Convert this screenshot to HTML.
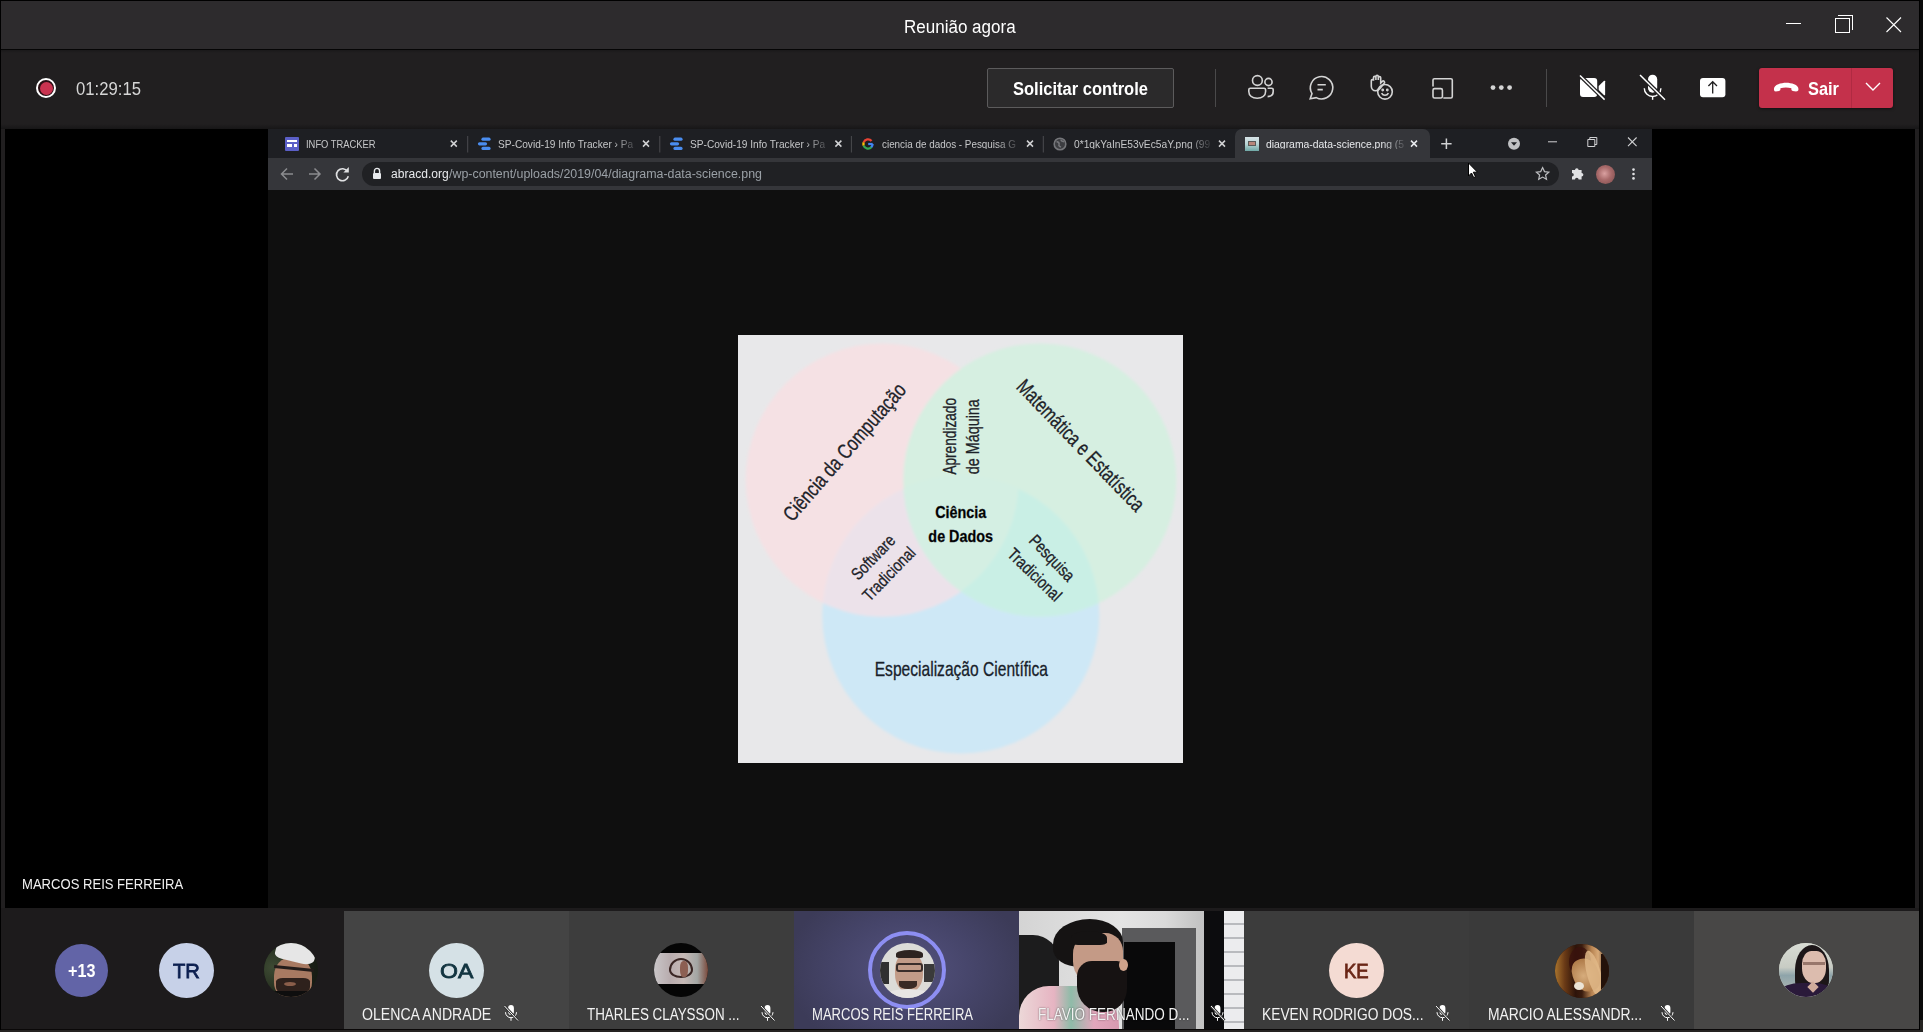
<!DOCTYPE html>
<html><head><meta charset="utf-8">
<style>
*{margin:0;padding:0;box-sizing:border-box;}
html,body{width:1923px;height:1032px;overflow:hidden;background:#0b0b0b;font-family:"Liberation Sans",sans-serif;position:relative;}
.a{position:absolute;}
.t{position:absolute;white-space:nowrap;line-height:1;}
.sx{display:inline-block;transform-origin:0 50%;}
</style></head>
<body>
<!-- window frame -->
<div class="a" style="left:0;top:0;width:1920px;height:1032px;background:#000;"></div>
<div class="a" style="left:1px;top:1px;width:1918px;height:48px;background:#2d2b2d;"></div>
<div class="a" style="left:1px;top:49px;width:1918px;height:1px;background:#050505;"></div>
<div class="a" style="left:1px;top:50px;width:1918px;height:858px;background:#211f20;"></div>
<div class="a" style="left:1px;top:50px;width:1918px;height:3px;background:linear-gradient(#1a191a,#211f20);"></div>
<div class="a" style="left:1px;top:124px;width:1918px;height:5px;background:linear-gradient(#211f20,#171617);"></div>
<div class="a" style="left:5px;top:129px;width:1910px;height:779px;background:#000;"></div>
<div class="a" style="left:1px;top:908px;width:1918px;height:122px;background:#1d1b1c;"></div>
<div class="a" style="left:1px;top:1029px;width:1918px;height:1px;background:#0a0808;"></div>
<div class="a" style="left:0;top:1030px;width:1923px;height:2px;background:#252321;"></div>
<div class="a" style="left:1920px;top:1020px;width:3px;height:10px;background:#252321;"></div>

<!-- TITLE -->
<div class="t" style="left:904px;top:18px;font-size:18px;color:#fff;"><span class="sx" style="transform:scaleX(.945)">Reunião agora</span></div>
<div class="a" style="left:1786px;top:23px;width:15px;height:1px;background:#fff;"></div>
<div class="a" style="left:1835px;top:18px;width:15px;height:15px;border:1px solid #fff;"></div>
<div class="a" style="left:1838px;top:15px;width:15px;height:3px;border-top:1px solid #fff;border-right:1px solid #fff;"></div>
<div class="a" style="left:1849px;top:15px;width:4px;height:15px;border-right:1px solid #fff;"></div>
<svg class="a" style="left:1885px;top:16px;" width="18" height="18" viewBox="0 0 18 18"><path d="M1.5 1.5 L16 16 M16 1.5 L1.5 16" stroke="#fff" stroke-width="1.1"/></svg>

<!-- TOOLBAR -->
<div class="a" style="left:36px;top:78px;width:20px;height:20px;border-radius:50%;border:2px solid #fff;background:#2a0e14;"></div>
<div class="a" style="left:39.5px;top:81.5px;width:13px;height:13px;border-radius:50%;background:#c93350;"></div>
<div class="t" style="left:76px;top:80px;font-size:18px;color:#d6d6d6;"><span class="sx" style="transform:scaleX(.927)">01:29:15</span></div>
<div class="a" style="left:987px;top:68px;width:187px;height:40px;border:1px solid #5c5b5c;border-radius:2px;background:#2b2a2b;"></div>
<div class="t" style="left:1013px;top:80px;font-size:18px;font-weight:bold;color:#fff;"><span class="sx" style="transform:scaleX(.918)">Solicitar controle</span></div>
<div class="a" style="left:1215px;top:69px;width:1px;height:38px;background:#4a494a;"></div>
<svg class="a" style="left:1237px;top:68px;" width="290" height="40" viewBox="1237 68 290 40" fill="none" stroke="#d4d4d4" stroke-width="1.6">
  <circle cx="1257.4" cy="80.5" r="4.9"/>
  <circle cx="1268.5" cy="82" r="3.6"/>
  <path d="M1250.5 88.2 h13.5 a1.6 1.6 0 0 1 1.6 1.6 v1.8 c0 4 -3.4 6.6 -8.4 6.6 s-8.4 -2.6 -8.4 -6.6 v-1.8 a1.6 1.6 0 0 1 1.6 -1.6z"/>
  <path d="M1267.6 88.2 h4 a1.6 1.6 0 0 1 1.6 1.6 v1.6 c0 3 -2.2 5 -5.6 5.2"/>
  <path d="M1310.2 98.8 l1.8 -5.2 a11.2 11.2 0 1 1 4.2 4.0 z"/>
  <path d="M1317.5 84.8 h8.3 M1317.5 89.6 h5.3"/>
  <path d="M1373.5 80.8 v-3.2 a1.2 1.2 0 0 1 2.4 0 v2.4 v-3.4 a1.2 1.2 0 0 1 2.4 0 v3.4 v-2.2 a1.2 1.2 0 0 1 2.4 0 v5.2 l1.6 -1.6 a1.3 1.3 0 0 1 1.9 1.8 l-4 5 a6 6 0 0 1 -4.6 2.6 a4.5 4.5 0 0 1 -4.3 -4.5 v-5.6 a1.1 1.1 0 0 1 2.2 0 z"/>
  <circle cx="1385" cy="91.8" r="7.3"/>
  <path d="M1381.6 93.2 a3.8 3.8 0 0 0 6.8 0"/>
  <circle cx="1382.7" cy="90" r="0.6" fill="#d4d4d4"/><circle cx="1387.3" cy="90" r="0.6" fill="#d4d4d4"/>
  <path d="M1433 86.5 v-6.4 a1.4 1.4 0 0 1 1.4 -1.4 h16.5 a1.4 1.4 0 0 1 1.4 1.4 v16.5 a1.4 1.4 0 0 1 -1.4 1.4 h-7.6"/>
  <rect x="1433" y="88.6" width="9.4" height="9.4" rx="1.6"/>
  <circle cx="1493" cy="87.6" r="2.4" fill="#d4d4d4" stroke="none"/>
  <circle cx="1501.3" cy="87.6" r="2.4" fill="#d4d4d4" stroke="none"/>
  <circle cx="1509.6" cy="87.6" r="2.4" fill="#d4d4d4" stroke="none"/>
</svg>
<div class="a" style="left:1546px;top:69px;width:1px;height:38px;background:#4a494a;"></div>
<svg class="a" style="left:1571px;top:68px;" width="170" height="40" viewBox="1571 68 170 40">
  <rect x="1580" y="78" width="17.2" height="19" rx="3" fill="#fff"/>
  <path d="M1598.7 86 l5.4 -5.2 a0.7 0.7 0 0 1 1 0.5 v13.4 a0.7 0.7 0 0 1 -1 0.5 l-5.4 -5.2z" fill="#fff"/>
  <path d="M1580 75.5 L1604.6 99.6" stroke="#201f20" stroke-width="4"/>
  <path d="M1580 75.5 L1604.6 99.6" stroke="#fff" stroke-width="1.5"/>
  <rect x="1648" y="74.7" width="9.2" height="18" rx="4.6" fill="#fff"/>
  <path d="M1644.3 88.2 a8.3 8.3 0 0 0 16.6 0" fill="none" stroke="#fff" stroke-width="1.4"/>
  <path d="M1652.6 96.4 v3.4" stroke="#fff" stroke-width="1.4"/>
  <path d="M1640 75 L1665 99.7" stroke="#201f20" stroke-width="4"/>
  <path d="M1640 75 L1665 99.7" stroke="#fff" stroke-width="1.5"/>
  <rect x="1700" y="78" width="25.4" height="19.2" rx="3" fill="#fff"/>
  <path d="M1712.7 93.4 V81.8 M1708.4 86 l4.3 -4.3 4.3 4.3" fill="none" stroke="#201f20" stroke-width="1.3"/>
</svg>
<div class="a" style="left:1759px;top:68px;width:134px;height:40px;border-radius:3px;background:#c4314b;box-shadow:0 1px 3px rgba(0,0,0,.5);"></div>
<div class="a" style="left:1851px;top:68px;width:1px;height:40px;background:#b02a42;"></div>
<svg class="a" style="left:1771px;top:77px;" width="32" height="20" viewBox="0 0 32 20">
  <path d="M3.2 13.5 c-1 -3 1 -5 4 -6.2 c5 -2 11 -2 16 0 c3 1.2 5 3.2 4 6.2 l-1 0.8 c-1 0.3 -3 0 -4.5 -0.4 c-1.3 -0.4 -1.4 -1.2 -1.3 -2.6 c-3.5 -1.2 -7.5 -1.2 -11 0 c0.1 1.4 0 2.2 -1.3 2.6 c-1.5 0.4 -3.5 0.7 -4.5 0.4z" fill="#fff"/>
</svg>
<div class="t" style="left:1808px;top:80px;font-size:18px;font-weight:bold;color:#fff;"><span class="sx" style="transform:scaleX(.91)">Sair</span></div>
<svg class="a" style="left:1864px;top:81px;" width="18" height="12" viewBox="0 0 18 12"><path d="M2 2 l7 7 7 -7" fill="none" stroke="#fff" stroke-width="1.4"/></svg>

<!-- BROWSER -->
<div class="a" style="left:268px;top:129px;width:1384px;height:29px;background:#1e1f23;"></div>
<div class="a" style="left:268px;top:158px;width:1384px;height:32px;background:#35363a;"></div>
<div class="a" style="left:268px;top:190px;width:1384px;height:718px;background:#0f0f0f;"></div>
<!-- active tab -->
<div class="a" style="left:1235px;top:129px;width:195px;height:29px;background:#35363a;border-radius:7px 7px 0 0;"></div>
<!-- tab 1 -->
<div class="a" style="left:285px;top:137px;width:14px;height:14px;background:#5b5fc7;border-radius:1px;"></div>
<div class="a" style="left:287px;top:140px;width:10px;height:2px;background:#fff;"></div>
<div class="a" style="left:287px;top:144px;width:5px;height:3px;background:#fff;"></div>
<div class="a" style="left:294px;top:144px;width:3px;height:3px;background:#fff;"></div>
<div class="t" style="left:306px;top:139px;font-size:10.5px;color:#c6c7c9;"><span class="sx" style="transform:scaleX(.893)">INFO TRACKER</span></div>
<!-- tab 2 -->
<svg class="a" style="left:477px;top:137px;" width="15" height="14" viewBox="0 0 15 14"><g stroke="#4a8df0" stroke-width="3.2" stroke-linecap="round"><path d="M6 2.2 h6"/><path d="M2.5 6.8 h6"/><path d="M6 11.4 h6"/></g></svg>
<div class="t" style="left:498px;top:138.5px;width:138px;-webkit-mask-image:linear-gradient(90deg,#000 84%,rgba(0,0,0,.15) 100%);font-size:10.5px;color:#c6c7c9;"><span class="sx" style="transform:scaleX(.965)">SP-Covid-19 Info Tracker › Pa</span></div>
<!-- tab 3 -->
<svg class="a" style="left:669px;top:137px;" width="15" height="14" viewBox="0 0 15 14"><g stroke="#4a8df0" stroke-width="3.2" stroke-linecap="round"><path d="M6 2.2 h6"/><path d="M2.5 6.8 h6"/><path d="M6 11.4 h6"/></g></svg>
<div class="t" style="left:690px;top:138.5px;width:138px;-webkit-mask-image:linear-gradient(90deg,#000 84%,rgba(0,0,0,.15) 100%);font-size:10.5px;color:#c6c7c9;"><span class="sx" style="transform:scaleX(.965)">SP-Covid-19 Info Tracker › Pa</span></div>
<!-- tab 4 google -->
<svg class="a" style="left:861px;top:137px;" width="14" height="14" viewBox="0 0 14 14">
  <path d="M10.52 4.04 A4.6 4.6 0 0 0 2.68 5.43" fill="none" stroke="#ea4335" stroke-width="2.3"/>
  <path d="M2.68 5.43 A4.6 4.6 0 0 0 2.68 8.57" fill="none" stroke="#fbbc05" stroke-width="2.3"/>
  <path d="M2.68 8.57 A4.6 4.6 0 0 0 10.52 9.96" fill="none" stroke="#34a853" stroke-width="2.3"/>
  <path d="M10.25 10.25 A4.6 4.6 0 0 0 11.60 7.00" fill="none" stroke="#4285f4" stroke-width="2.3"/>
  <path d="M7.2 7 H11.7" stroke="#4285f4" stroke-width="2.2"/>
</svg>
<div class="t" style="left:882px;top:138.5px;width:136px;-webkit-mask-image:linear-gradient(90deg,#000 84%,rgba(0,0,0,.15) 100%);font-size:10.5px;color:#c6c7c9;"><span class="sx" style="transform:scaleX(.94)">ciencia de dados - Pesquisa G</span></div>
<!-- tab 5 globe -->
<svg class="a" style="left:1053px;top:137px;" width="14" height="14" viewBox="0 0 14 14">
  <circle cx="7" cy="7" r="5.8" fill="#3c3d41" stroke="#75767a" stroke-width="1.6"/>
  <path d="M3.5 4.5 c2 0.5 3 1.5 2.5 3 c-0.5 1 0.5 2 2 2.5 M8 2.5 c0 1.5 1.5 2 3 2.2" fill="none" stroke="#75767a" stroke-width="1.6"/>
</svg>
<div class="t" style="left:1074px;top:138.5px;width:136px;-webkit-mask-image:linear-gradient(90deg,#000 84%,rgba(0,0,0,.15) 100%);font-size:10.5px;color:#c6c7c9;"><span class="sx" style="transform:scaleX(.975)">0*1qkYaInE53vEc5aY.png (99</span></div>
<!-- tab 6 active -->
<div class="a" style="left:1245px;top:137px;width:14px;height:14px;background:linear-gradient(#d8e4e8,#b8d4d4 50%,#6fa8a6);"></div>
<div class="a" style="left:1248px;top:141px;width:8px;height:5px;background:#b8867a;border:1px solid #5a5a58;"></div>
<div class="t" style="left:1266px;top:138.5px;width:138px;-webkit-mask-image:linear-gradient(90deg,#000 84%,rgba(0,0,0,.15) 100%);font-size:10.5px;color:#e8eaed;"><span class="sx" style="transform:scaleX(.99)">diagrama-data-science.png (5</span></div>
<!-- omnibox -->
<div class="a" style="left:362px;top:162px;width:1197px;height:24px;border-radius:12px;background:#202124;"></div>
<!-- close buttons -->
<svg class="a" style="left:268px;top:129px;" width="1384" height="61" viewBox="268 129 1384 61" fill="none" stroke="#d0d1d3" stroke-width="1.5">
  <path d="M450.8 140.6 l6 6 M456.8 140.6 l-6 6"/>
  <path d="M643 140.6 l6 6 M649 140.6 l-6 6"/>
  <path d="M835.4 140.6 l6 6 M841.4 140.6 l-6 6"/>
  <path d="M1027 140.6 l6 6 M1033 140.6 l-6 6"/>
  <path d="M1219 140.6 l6 6 M1225 140.6 l-6 6"/>
  <path d="M1411 140.6 l6 6 M1417 140.6 l-6 6" stroke="#e8eaed"/>
  <path d="M467.7 136 v16.5 M659.8 136 v16.5 M851.4 136 v16.5 M1043.3 136 v16.5" stroke="#4a4b4f" stroke-width="1"/>
  <path d="M1446.4 138.5 v10.4 M1441.2 143.7 h10.4" stroke="#d0d1d3" stroke-width="1.5"/>
  <circle cx="1514" cy="143.7" r="6" fill="#c0c1c3" stroke="none"/>
  <path d="M1511 142.3 h6 l-3 3.4z" fill="#1e1f23" stroke="none"/>
  <path d="M1548 141.8 h9" stroke-width="1"/>
  <path d="M1587.8 139.5 h7 v7 h-7z M1589.8 139.5 v-2 h7 v7 h-2" stroke-width="1"/>
  <path d="M1628 137.5 l8.6 8.6 M1636.6 137.5 l-8.6 8.6" stroke-width="1.1"/>
  <!-- nav -->
  <path d="M293 174 h-11 M287 168.5 l-5.5 5.5 5.5 5.5" stroke="#8b8c8f" stroke-width="1.5"/>
  <path d="M309 174 h11 M314.5 168.5 l5.5 5.5 -5.5 5.5" stroke="#8b8c8f" stroke-width="1.5"/>
  <path d="M347.5 171.4 a6 6 0 1 0 0.8 4.8" stroke="#e0e1e3" stroke-width="1.6"/>
  <path d="M348.8 167 v5.4 h-5.4z" fill="#e0e1e3" stroke="none"/>
  <!-- star -->
  <path d="M1542.6 167.6 l1.9 4 4.3 .5 -3.2 2.9 .9 4.3 -3.9 -2.2 -3.9 2.2 .9 -4.3 -3.2 -2.9 4.3 -.5z" stroke="#bdbec1" stroke-width="1.2"/>
  <circle cx="1633.5" cy="169.6" r="1.3" fill="#e0e1e3" stroke="none"/>
  <circle cx="1633.5" cy="174" r="1.3" fill="#e0e1e3" stroke="none"/>
  <circle cx="1633.5" cy="178.4" r="1.3" fill="#e0e1e3" stroke="none"/>
</svg>
<svg class="a" style="left:371px;top:167px;" width="12" height="13" viewBox="0 0 12 13"><path d="M3.4 6 v-2 a2.6 2.6 0 0 1 5.2 0 v2" fill="none" stroke="#e8eaed" stroke-width="1.4"/><rect x="2" y="6" width="8" height="6" rx="1" fill="#e8eaed"/></svg>
<div class="t" style="left:391px;top:168px;font-size:12.5px;color:#e8eaed;"><span class="sx" style="transform:scaleX(.966)">abracd.org</span></div>
<div class="t" style="left:448.5px;top:168px;font-size:12.5px;color:#9aa0a6;"><span class="sx" style="transform:scaleX(.992)">/wp-content/uploads/2019/04/diagrama-data-science.png</span></div>
<!-- cursor -->
<svg class="a" style="left:1467px;top:162px;" width="12" height="17" viewBox="0 0 12 17"><path d="M1.5 1 v13 l3 -3 2.2 4.6 1.8 -0.9 -2.2 -4.5 h4.2z" fill="#fff" stroke="#000" stroke-width="1"/></svg>
<!-- puzzle -->
<svg class="a" style="left:1570px;top:166px;" width="15" height="15" viewBox="0 0 15 15"><path d="M2 4 h3 a1.8 1.8 0 0 1 3.6 0 h3 v3 a1.8 1.8 0 0 1 0 3.6 v3 h-3 a1.8 1.8 0 0 0 -3.6 0 h-3 v-3 a1.8 1.8 0 0 0 0 -3.6z" fill="#e0e1e3"/></svg>
<!-- avatar -->
<div class="a" style="left:1596px;top:164.5px;width:19px;height:19px;border-radius:50%;background:radial-gradient(circle at 45% 45%,#d9a0a0 0,#a86a6a 45%,#7a4a4a 100%);"></div>

<!-- DIAGRAM -->
<div class="a" style="left:737.5px;top:335px;width:445.5px;height:428px;background:#e8e8ea;overflow:hidden;">
<svg class="a" style="left:0;top:0;" width="446" height="428" viewBox="737.5 335 445.5 428">
  <defs>
    <filter id="bl" x="-10%" y="-10%" width="120%" height="120%"><feGaussianBlur stdDeviation="1.8"/></filter>
    <clipPath id="cb"><circle cx="960" cy="615" r="138.5"/></clipPath>
    <clipPath id="cp"><circle cx="881.5" cy="480" r="136.5"/></clipPath>
  </defs>
  <g filter="url(#bl)">
    <circle cx="960" cy="615" r="138.5" fill="#cee8f6"/>
    <circle cx="881.5" cy="480" r="136.5" fill="#f5e1e4"/>
    <circle cx="881.5" cy="480" r="136.5" fill="#ece2ea" clip-path="url(#cb)"/>
    <circle cx="1039" cy="480" r="136.5" fill="#d6efe1"/>
    <circle cx="1039" cy="480" r="136.5" fill="#c9efe5" clip-path="url(#cb)"/>
    <g clip-path="url(#cb)"><circle cx="1039" cy="480" r="136.5" fill="#d4efe3" clip-path="url(#cp)"/></g>
  </g>
  <g font-family="Liberation Sans, sans-serif" fill="#1d2228" text-anchor="middle" stroke="#1d2228" stroke-width="0.3">
    <text id="d1" transform="translate(849.1 456.7) rotate(-49) scale(0.78 1)" font-size="21">Ciência da Computação</text>
    <text id="d2" transform="translate(1074.8 450.3) rotate(46) scale(0.76 1)" font-size="21">Matemática e Estatística</text>
    <text id="d3" transform="translate(954.8 436.3) rotate(-90) scale(0.78 1)" font-size="17.5">Aprendizado</text>
    <text id="d4" transform="translate(977.9 436.7) rotate(-90) scale(0.82 1)" font-size="17.5">de Máquina</text>
    <text id="d5" transform="translate(959.9 518.3) scale(0.87 1)" font-size="16.5" font-weight="bold" fill="#000">Ciência</text>
    <text id="d6" transform="translate(959.9 541.5) scale(0.87 1)" font-size="16.5" font-weight="bold" fill="#000">de Dados</text>
    <text id="d7" transform="translate(876.6 561.3) rotate(-46) scale(0.82 1)" font-size="17">Software</text>
    <text id="d8" transform="translate(892.3 578) rotate(-46) scale(0.82 1)" font-size="17">Tradicional</text>
    <text id="d9" transform="translate(1047.1 562) rotate(46) scale(0.82 1)" font-size="17">Pesquisa</text>
    <text id="d10" transform="translate(1029.8 578.8) rotate(44) scale(0.82 1)" font-size="17">Tradicional</text>
    <text id="d11" transform="translate(960.6 676.2) scale(0.78 1)" font-size="20" fill="#16212c">Especialização Científica</text>
  </g>
</svg>
</div>
<!-- stage name -->
<div class="t" style="left:22px;top:875.5px;font-size:15.5px;color:#f0f0f0;"><span class="sx" style="transform:scaleX(.843)">MARCOS REIS FERREIRA</span></div>
<!--STAGE-->
<!-- STRIP tiles -->
<div class="a" style="left:344px;top:911px;width:225px;height:118px;background:#444444;"></div>
<div class="a" style="left:569px;top:911px;width:225px;height:118px;background:#3d3d3d;"></div>
<div class="a" style="left:794px;top:911px;width:225px;height:118px;background:radial-gradient(ellipse 120px 90px at 113px 58px,#54527e 0%,#46456a 55%,#3c3b58 100%);"></div>
<div class="a" style="left:1019px;top:911px;width:225px;height:118px;background:#d8d8d8;overflow:hidden;">
  <div class="a" style="left:0;top:0;width:225px;height:118px;background:linear-gradient(90deg,#d4d4d4 0%,#e4e4e4 45%,#dadada 65%,#c4c4c4 80%,#bdbdbd 100%);"></div>
  <div class="a" style="left:185px;top:0;width:20px;height:118px;background:#0c0c0e;"></div>
  <div class="a" style="left:205px;top:0;width:20px;height:118px;background:repeating-linear-gradient(180deg,#ececee 0 12px,#b9babe 12px 14px);"></div>
  <div class="a" style="left:103px;top:17px;width:74px;height:101px;background:#5a5a5c;"></div>
  <div class="a" style="left:105px;top:31px;width:51px;height:87px;background:#09090a;"></div>
  <div class="a" style="left:0;top:24px;width:40px;height:94px;border-radius:0 26px 0 0;background:#1c1c1d;"></div>
  <div class="a" style="left:0;top:75px;width:100px;height:43px;border-radius:30px 40px 0 0;background:linear-gradient(90deg,#ecd8d8 0%,#e6b4c2 35%,#8fbba8 52%,#e2a6bc 75%,#d89ab0 100%);"></div>
  <div class="a" style="left:34px;top:8px;width:70px;height:48px;border-radius:55% 50% 30% 40%;background:#151313;"></div>
  <div class="a" style="left:54px;top:22px;width:50px;height:52px;border-radius:40% 35% 30% 45%;background:#c49a86;"></div>
  <div class="a" style="left:52px;top:20px;width:36px;height:14px;border-radius:50% 50% 20% 20%;background:#151313;"></div>
  <div class="a" style="left:58px;top:50px;width:50px;height:51px;border-radius:30% 20% 45% 50%;background:#161212;"></div>
  <div class="a" style="left:100px;top:48px;width:9px;height:12px;border-radius:50%;background:#cfa38c;"></div>
</div>
<div class="a" style="left:1244px;top:911px;width:225px;height:118px;background:#3c3c3c;"></div>
<div class="a" style="left:1469px;top:911px;width:225px;height:118px;background:#3a3a3a;"></div>
<div class="a" style="left:1694px;top:911px;width:225px;height:118px;background:#484746;"></div>

<!-- left avatars -->
<div class="a" style="left:55px;top:943.5px;width:53px;height:53px;border-radius:50%;background:#6264a7;"></div>
<div class="t" style="left:68px;top:961px;font-size:19px;font-weight:bold;color:#fff;"><span class="sx" style="transform:scaleX(.85)">+13</span></div>
<div class="a" style="left:159px;top:942.5px;width:55px;height:55px;border-radius:50%;background:#c7d1e8;"></div>
<div class="a" style="left:264px;top:943px;width:54px;height:54px;border-radius:50%;overflow:hidden;background:#1c2418;">
  <div class="a" style="left:0;top:0;width:54px;height:54px;background:radial-gradient(circle at 15% 45%,#3d4a33 0,#1f271a 55%,#121510 100%);"></div>
  <div class="a" style="left:10px;top:14px;width:38px;height:42px;border-radius:45% 45% 40% 40%;background:#a87a62;"></div>
  <div class="a" style="left:12px;top:-3px;width:40px;height:22px;border-radius:50% 50% 30% 20%;background:#e6e6e6;transform:rotate(14deg);"></div>
  <div class="a" style="left:10px;top:24px;width:40px;height:3px;background:#231c1a;transform:rotate(6deg);"></div>
  <div class="a" style="left:12px;top:35px;width:34px;height:18px;border-radius:20% 20% 50% 50%;background:#2e211c;"></div>
  <div class="a" style="left:20px;top:39px;width:12px;height:4px;border-radius:50%;background:#8a5e4a;"></div>
  <div class="a" style="left:0;top:48px;width:54px;height:8px;background:#0e0e0e;"></div>
</div>
<!-- OA -->
<div class="a" style="left:429px;top:943px;width:55px;height:55px;border-radius:50%;background:#d5e1e6;"></div>
<!-- THARLES photo -->
<div class="a" style="left:654px;top:943px;width:54px;height:54px;border-radius:50%;overflow:hidden;background:#050505;">
  <div class="a" style="left:0;top:10px;width:54px;height:31px;background:linear-gradient(90deg,#c9c6c8 0%,#b8acae 30%,#c6b9b6 55%,#a3a6a4 80%,#7a4a3c 100%);"></div>
  <div class="a" style="left:15px;top:15px;width:24px;height:20px;border:2px solid #3a2624;border-radius:50% 50% 50% 50%/60% 60% 40% 40%;"></div>
  <div class="a" style="left:26px;top:18px;width:8px;height:16px;background:#8c5f52;border-radius:40%;"></div>
</div>
<!-- MARCOS ring -->
<div class="a" style="left:868px;top:931px;width:78px;height:78px;border-radius:50%;border:4.5px solid #8d8ef2;"></div>
<div class="a" style="left:879.5px;top:942.5px;width:55px;height:55px;border-radius:50%;overflow:hidden;background:#dcdcd8;">
  <div class="a" style="left:0;top:19px;width:9px;height:22px;background:#303030;"></div>
  <div class="a" style="left:44px;top:21px;width:11px;height:18px;background:#3a3a3a;"></div>
  <div class="a" style="left:15px;top:9px;width:28px;height:40px;border-radius:45% 45% 45% 45%;background:#c29c88;"></div>
  <div class="a" style="left:16px;top:7px;width:27px;height:8px;border-radius:50% 50% 20% 20%;background:#2e2420;"></div>
  <div class="a" style="left:16px;top:20px;width:27px;height:9px;border:2px solid #3a2e2a;border-radius:3px;"></div>
  <div class="a" style="left:19px;top:38px;width:18px;height:8px;border-radius:0 0 50% 50%;background:#3a2a24;"></div>
  <div class="a" style="left:6px;top:46px;width:44px;height:12px;border-radius:50% 50% 0 0;background:#e8e6e4;"></div>
</div>
<!-- KE -->
<div class="a" style="left:1328.5px;top:942.5px;width:55px;height:55px;border-radius:50%;background:#f4dbd3;"></div>
<!-- MARCIO lion -->
<div class="a" style="left:1554.5px;top:943.5px;width:54px;height:54px;border-radius:50%;overflow:hidden;background:#2a140a;">
  <div class="a" style="left:0;top:0;width:54px;height:54px;background:linear-gradient(90deg,#a8742e 0%,#6a3a16 18%,#2e140a 38%,#3a1c0e 50%,#b88452 68%,#d8aa78 80%,#3a2012 100%);"></div>
  <div class="a" style="left:14px;top:3px;width:22px;height:30px;border-radius:50%;background:#3a120c;opacity:.8;"></div>
  <div class="a" style="left:18px;top:14px;width:26px;height:34px;border-radius:40% 50% 40% 50%;background:radial-gradient(circle at 40% 50%,#d6ac7c 0,#b07c4a 70%);transform:rotate(-20deg);"></div>
  <div class="a" style="left:19px;top:38px;width:10px;height:8px;border-radius:50%;background:#ece4d6;"></div>
  <div class="a" style="left:32px;top:6px;width:14px;height:48px;border-radius:50%;background:#e0b888;transform:rotate(-15deg);opacity:.85;"></div>
  <div class="a" style="left:46px;top:10px;width:10px;height:40px;background:#24120a;"></div>
</div>
<!-- woman -->
<div class="a" style="left:1779px;top:942.5px;width:54px;height:54px;border-radius:50%;overflow:hidden;background:#c4c8c0;">
  <div class="a" style="left:0;top:0;width:54px;height:54px;background:linear-gradient(180deg,#d8dcd4 0%,#c8ccc4 45%,#8ea4aa 60%,#b8bcb4 100%);"></div>
  <div class="a" style="left:16px;top:2px;width:34px;height:50px;border-radius:50% 50% 30% 30%;background:#1c1618;"></div>
  <div class="a" style="left:23px;top:8px;width:24px;height:32px;border-radius:40% 40% 45% 45%;background:#dcbcae;"></div>
  <div class="a" style="left:24px;top:19px;width:22px;height:3px;background:#7a5a50;opacity:.7;"></div>
  <div class="a" style="left:2px;top:40px;width:52px;height:20px;border-radius:40% 40% 0 0;background:#2a1a3a;"></div>
  <div class="a" style="left:30px;top:40px;width:8px;height:8px;background:#d0ac9c;transform:rotate(45deg);"></div>
</div>
<!-- initials -->
<div class="t" style="left:173px;top:960px;font-size:21px;color:#0c1f50;-webkit-text-stroke:.8px #0c1f50;"><span class="sx" style="transform:scaleX(.96)">TR</span></div>
<div class="t" style="left:440px;top:960px;font-size:21px;color:#123440;-webkit-text-stroke:.8px #123440;"><span class="sx" style="transform:scaleX(1.1)">OA</span></div>
<div class="t" style="left:1344px;top:960px;font-size:21px;color:#6a2616;-webkit-text-stroke:.8px #6a2616;"><span class="sx" style="transform:scaleX(.88)">KE</span></div>
<!-- names -->
<div class="t" style="left:362px;top:1007px;font-size:16px;color:#f2f2f2;"><span class="sx" style="transform:scaleX(0.881)">OLENCA ANDRADE</span></div>
<div class="t" style="left:587px;top:1007px;font-size:16px;color:#f2f2f2;"><span class="sx" style="transform:scaleX(0.838)">THARLES CLAYSSON ...</span></div>
<div class="t" style="left:812px;top:1007px;font-size:16px;color:#f2f2f2;"><span class="sx" style="transform:scaleX(0.816)">MARCOS REIS FERREIRA</span></div>
<div class="t" style="left:1038px;top:1007px;font-size:16px;color:#f2f2f2;text-shadow:0 0 2px rgba(0,0,0,.6);"><span class="sx" style="transform:scaleX(0.845)">FLAVIO FERNANDO D...</span></div>
<div class="t" style="left:1262px;top:1007px;font-size:16px;color:#f2f2f2;"><span class="sx" style="transform:scaleX(0.861)">KEVEN RODRIGO DOS...</span></div>
<div class="t" style="left:1488px;top:1007px;font-size:16px;color:#f2f2f2;"><span class="sx" style="transform:scaleX(0.866)">MARCIO ALESSANDR...</span></div>
<!-- mic-off icons -->
<svg class="a" style="left:0;top:1000px;" width="1923" height="26" viewBox="0 1000 1923 26">
  <defs><g id="mic">
    <rect x="4.6" y="0" width="5.8" height="10" rx="2.9" fill="#fff"/>
    <path d="M2 7.2 a5.5 5.5 0 0 0 11 0" fill="none" stroke="#fff" stroke-width="1"/>
    <path d="M7.5 12.8 v3" stroke="#fff" stroke-width="1"/>
    <path d="M1 1 L14.5 15.5" stroke="#333" stroke-width="2.6"/>
    <path d="M1 1 L14.5 15.5" stroke="#fff" stroke-width="1"/>
  </g></defs>
  <use href="#mic" x="503.5" y="1005"/>
  <use href="#mic" x="760" y="1005"/>
  <use href="#mic" x="1210" y="1005"/>
  <use href="#mic" x="1435" y="1005"/>
  <use href="#mic" x="1660" y="1005"/>
</svg>
<!--STRIP-->
</body></html>
